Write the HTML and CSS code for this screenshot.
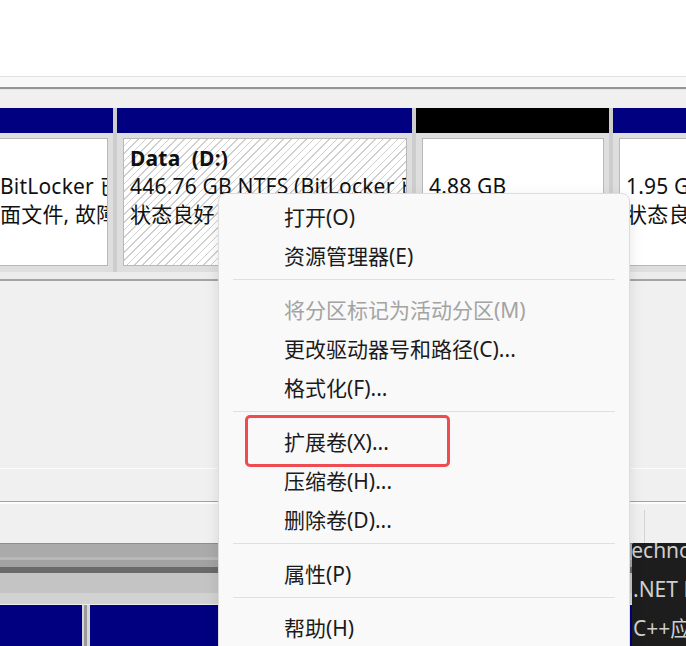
FILE: index.html
```html
<!DOCTYPE html>
<html lang="zh-CN">
<head>
  <meta charset="UTF-8" />
  <title>磁盘管理</title>
  <link rel="stylesheet" href="styles.css">
</head>
<body>
  <div class="screen">
    <div class="top-blank"></div>
    <div class="toolbar-edge"></div>

    <div class="disk-row">
      <div class="part part-1">
        <div class="part-head"></div>
        <div class="part-body">
          <div class="part-box">
            <div>&nbsp;</div>
            <div>BitLocker 已加密)</div>
            <div>面文件, 故障转储, 基本数据分区)</div>
          </div>
        </div>
      </div>
      <div class="part part-2">
        <div class="part-head"></div>
        <div class="part-body">
          <div class="part-box hatched">
            <div class="vol-name">Data&nbsp; (D:)</div>
            <div>446.76 GB NTFS (BitLocker 已加密)</div>
            <div>状态良好 (基本数据分区)</div>
          </div>
        </div>
      </div>
      <div class="part part-3">
        <div class="part-head unalloc"></div>
        <div class="part-body">
          <div class="part-box">
            <div>&nbsp;</div>
            <div>4.88 GB</div>
            <div>未分配</div>
          </div>
        </div>
      </div>
      <div class="part part-4">
        <div class="part-head"></div>
        <div class="part-body">
          <div class="part-box">
            <div>&nbsp;</div>
            <div>1.95 GB NTFS</div>
            <div>状态良好 (恢复分区)</div>
          </div>
        </div>
      </div>
    </div>

    <div class="pane-top"></div>
    <div class="lower-pane"></div>
    <div class="pane-split">
      <div class="split-main"></div>
      <div class="split-side"></div>
    </div>

    <div class="bottom-row">
      <div class="disk2">
        <div class="scroll-band"></div>
        <div class="disk2-bars">
          <div class="bar bar-first"></div>
          <div class="bar-gap"></div>
          <div class="bar bar-rest"></div>
        </div>
      </div>
      <div class="console">
        <div class="console-lines">
          <div class="cut">Technology</div>
          <div>.NET Framework</div>
          <div>C++应用</div>
        </div>
      </div>
    </div>

    <div class="context-menu">
      <div class="menu-item">打开(O)</div>
      <div class="menu-item">资源管理器(E)</div>
      <div class="menu-sep"></div>
      <div class="menu-item disabled">将分区标记为活动分区(M)</div>
      <div class="menu-item">更改驱动器号和路径(C)...</div>
      <div class="menu-item">格式化(F)...</div>
      <div class="menu-sep"></div>
      <div class="menu-item marked">扩展卷(X)...</div>
      <div class="menu-item">压缩卷(H)...</div>
      <div class="menu-item">删除卷(D)...</div>
      <div class="menu-sep"></div>
      <div class="menu-item">属性(P)</div>
      <div class="menu-sep"></div>
      <div class="menu-item">帮助(H)</div>
    </div>
  </div>
</body>
</html>
```

FILE: styles.css
```css
body {
  margin: 0;
  background: #fff;
  font-family: "Noto Sans", "Noto Sans CJK SC", sans-serif;
}

.screen {
  position: relative;
  width: 686px;
  height: 646px;
  overflow: hidden;
  background: #f0f0f0;
}

.top-blank {
  height: 76px;
  background: #fff;
}

.toolbar-edge {
  height: 32px;
  background: linear-gradient(to bottom, #e2e2e2 0 1px, #f8f8f8 1px 11px, #959595 11px 13px, #e6e6e6 13px 14px, #f0f0f0 14px);
}

/* disk 1 partitions */
.disk-row {
  display: flex;
  gap: 4px;
  height: 164px;
  background: #cdcdcd;
}

.part {
  display: flex;
  flex-direction: column;
  flex-shrink: 0;
  min-width: 0;
}

.part-1 { width: 113px; }
.part-2 { width: 295px; }
.part-3 { width: 193px; }
.part-4 { flex: 1 1 0; }

.part-head {
  height: 25px;
  background: #000080;
}

.part-head.unalloc {
  background: #000;
}

.part-body {
  flex: 1;
  padding: 5px 5px 6px 6px;
  background: #dedede;
  min-width: 0;
}

.part-1 .part-body {
  padding-left: 0;
}

.part-4 .part-body {
  padding-right: 0;
}

.part-box {
  height: 100%;
  box-sizing: border-box;
  border: 1px solid #b8b8b8;
  background: #fff;
  padding: 5px 6px;
  overflow: hidden;
  white-space: nowrap;
  font-size: 21px;
  letter-spacing: 0.2px;
  line-height: 28px;
  color: #111;
}

.part-1 .part-box {
  border-left: none;
  padding-left: 0;
}

.part-4 .part-box {
  border-right: none;
}

.part-box.hatched {
  background: repeating-linear-gradient(135deg, #fff 0 4.3px, #cfcfcf 4.3px 5.4px);
}

.vol-name {
  font-weight: bold;
}

.pane-top {
  height: 9px;
  background: linear-gradient(to bottom, #ececec 0 7px, #a4a4a4 7px 9px);
}

.lower-pane {
  height: 220px;
  background: linear-gradient(to bottom, #f0f0f0 0 187px, #fbfbfb 187px 188px, #f0f0f0 188px);
}

.pane-split {
  display: flex;
  height: 42px;
  background: linear-gradient(to bottom, #a2a2a2 0 1px, #fdfdfd 1px 3px, #f0f0f0 3px);
}

.split-main {
  width: 644px;
}

.split-side {
  flex: 1;
  margin-top: 9px;
  border-left: 1px solid #d2d2d2;
}

/* disk 2 strip + console window */
.bottom-row {
  display: flex;
  height: 103px;
}

.disk2 {
  width: 632px;
  flex-shrink: 0;
  display: flex;
  flex-direction: column;
}

.scroll-band {
  height: 62px;
  background: linear-gradient(to bottom, #8e8e8e 0 1px, #aaaaaa 1px 14px, #b8b8b8 14px 17px, #a2a2a2 17px 24px, #6a6a6a 24px 30px, #c4c4c4 30px 50px, #d2d2d2 50px 61px, #ececec 61px);
}

.disk2-bars {
  flex: 1;
  display: flex;
}

.bar {
  background: #000080;
}

.bar-first { width: 82px; }
.bar-rest { flex: 1; }

.bar-gap {
  width: 8px;
  background: linear-gradient(to right, #d6d6d6 0 2px, #9a9a9a 2px 5px, #d6d6d6 5px);
}

.console {
  flex: 1;
  min-width: 0;
  background: #1d1d1d;
  color: #cfcfcf;
  font-size: 21px;
  line-height: 39px;
  white-space: nowrap;
  overflow: hidden;
}

.console-lines {
  margin-top: -12px;
  padding-left: 1px;
}

.cut {
  text-indent: -12px;
}

/* context menu */
.context-menu {
  position: absolute;
  left: 218px;
  top: 193px;
  width: 412px;
  height: 480px;
  box-sizing: border-box;
  padding-top: 4px;
  background: #f9f9f9;
  border: 1px solid #dcdcdc;
  border-radius: 8px;
  box-shadow: 0 4px 14px rgba(0, 0, 0, 0.10);
}

.menu-item {
  position: relative;
  height: 39px;
  line-height: 39px;
  padding-left: 65px;
  font-size: 21px;
  color: #1b1b1b;
  white-space: nowrap;
}

.menu-item.disabled {
  color: #a3a3a3;
}

.menu-item.marked::after {
  content: "";
  position: absolute;
  left: 26px;
  top: -8px;
  width: 205px;
  height: 52px;
  box-sizing: border-box;
  border: 3px solid #ef4b51;
  border-radius: 5px;
}

.menu-sep {
  height: 1px;
  margin: 3px 14px 11px;
  background: #e0e0e0;
}
```
